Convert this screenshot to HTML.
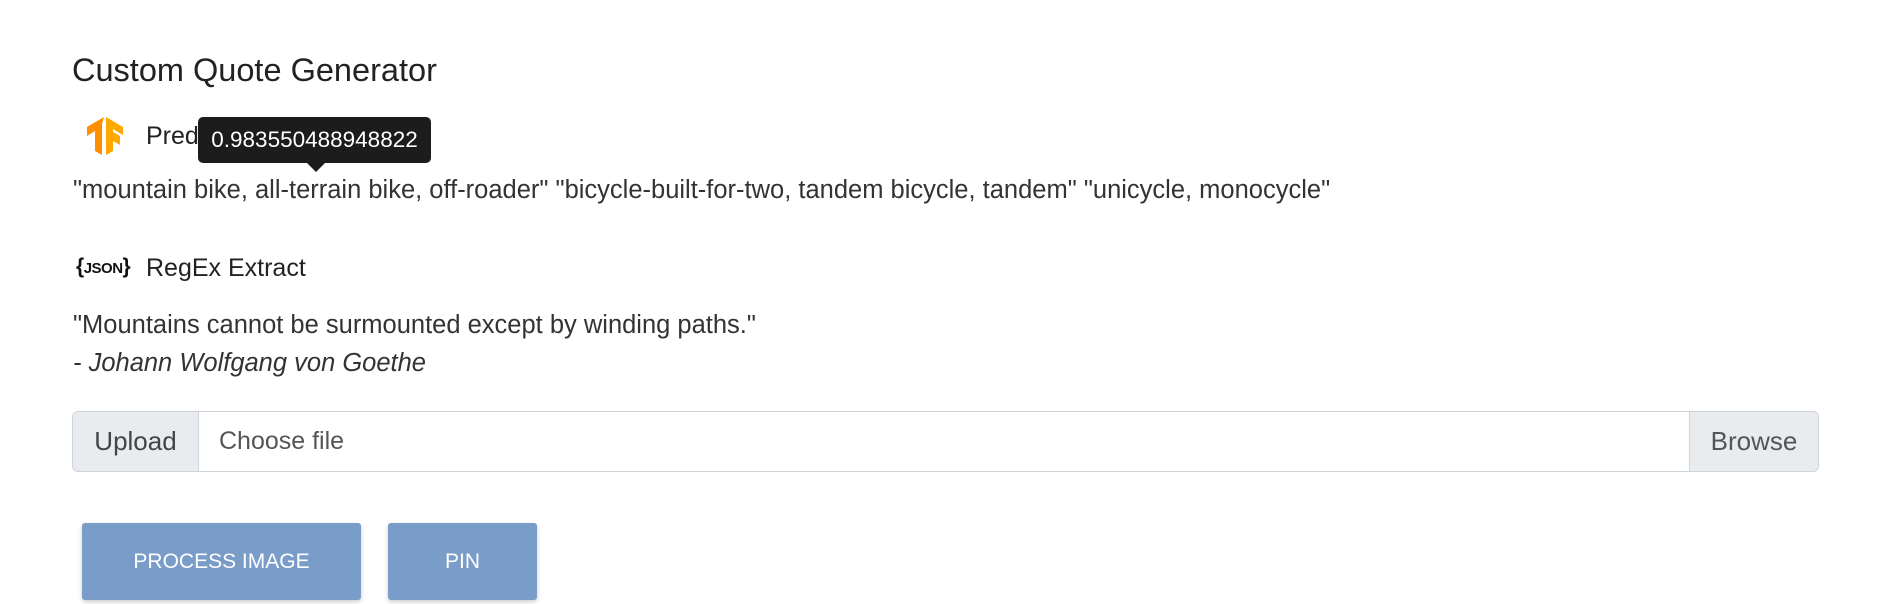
<!DOCTYPE html>
<html><head><meta charset="utf-8"><style>
*{box-sizing:border-box;margin:0;padding:0}
body{width:1891px;height:604px;background:#fff;font-family:"Liberation Sans",sans-serif;color:#2b2b2b;position:relative;overflow:hidden}
.a{position:absolute;white-space:nowrap}
.t{font-size:25.5px;letter-spacing:0;color:#333}
</style></head><body>
<div class="a" style="left:72px;top:52px;font-size:32.5px;color:#222">Custom Quote Generator</div>
<svg class="a" style="left:87px;top:117px" width="36" height="38" viewBox="0 0 36 38">
<polygon points="17,0 0,10 0,19 8,14 8,34 15,38 15,7" fill="#ff8f00"/>
<polygon points="19,0 19,38 26,34 26,24 33,28 33,19 26,15 26,12 36,18 36,10" fill="#ffa800"/>
</svg>
<div class="a" style="left:146px;top:122px;font-size:25px;color:#222">Predictions</div>
<div class="a" style="left:198px;top:117px;width:233px;height:46px;background:#1c1c1c;border-radius:5px;color:#fff;font-size:22.5px;text-align:center;line-height:46px">0.983550488948822</div>
<div class="a" style="left:306px;top:162px;width:0;height:0;border-left:10px solid transparent;border-right:10px solid transparent;border-top:10px solid #1c1c1c"></div>
<div class="a t" style="left:73px;top:176px">"mountain bike, all-terrain bike, off-roader" "bicycle-built-for-two, tandem bicycle, tandem" "unicycle, monocycle"</div>
<div class="a" style="left:76px;top:255px;font-size:21px;font-weight:bold;color:#111;letter-spacing:-0.5px">{<span style="font-size:15px">JSON</span>}</div>
<div class="a" style="left:146px;top:254px;font-size:25px;color:#222">RegEx Extract</div>
<div class="a t" style="left:73px;top:311px">"Mountains cannot be surmounted except by winding paths."</div>
<div class="a t" style="left:73px;top:349px;font-style:italic">- Johann Wolfgang von Goethe</div>
<div class="a" style="left:72px;top:411px;width:1747px;height:61px;border:1.5px solid #cfd3d8;border-radius:6px;overflow:hidden;background:#fff">
<div class="a" style="left:0;top:0;width:126px;height:100%;background:#e9ecef;border-right:1.5px solid #cfd3d8;font-size:26px;line-height:58px;text-align:center;color:#444">Upload</div>
<div class="a" style="left:146px;top:0;font-size:25px;line-height:58px;color:#555">Choose file</div>
<div class="a" style="right:0;top:0;width:129px;height:100%;background:#e9ecef;border-left:1.5px solid #cfd3d8;font-size:26px;line-height:58px;text-align:center;color:#555">Browse</div>
</div>
<div class="a" style="left:82px;top:523px;width:279px;height:77px;background:#7a9cc8;border-radius:3px;box-shadow:0 2px 5px rgba(0,0,0,.2);color:#fff;font-size:21px;line-height:77px;text-align:center">PROCESS IMAGE</div>
<div class="a" style="left:388px;top:523px;width:149px;height:77px;background:#7a9cc8;border-radius:3px;box-shadow:0 2px 5px rgba(0,0,0,.2);color:#fff;font-size:21px;line-height:77px;text-align:center">PIN</div>
</body></html>
